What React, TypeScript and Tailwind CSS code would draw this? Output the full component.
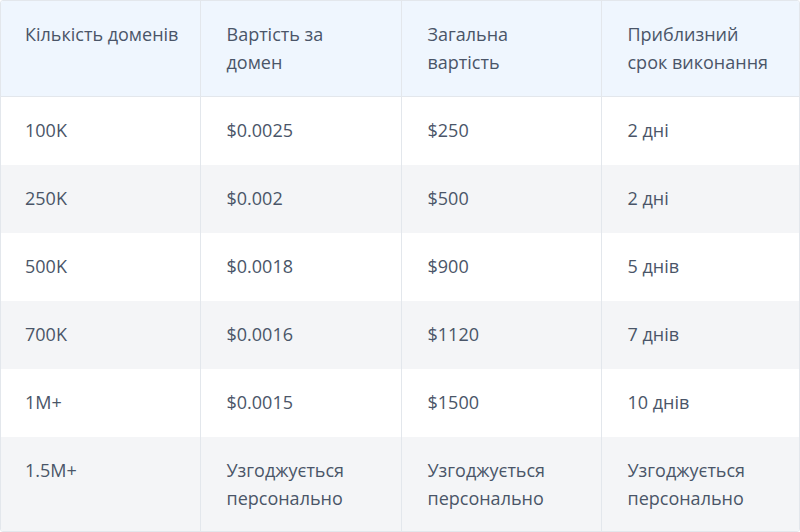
const header = [["Кількість доменів"], ["Вартість за", "домен"], ["Загальна", "вартість"], ["Приблизний", "срок виконання"]];

const rows = [
  ["100K", "$0.0025", "$250", "2 дні"],
  ["250K", "$0.002", "$500", "2 дні"],
  ["500K", "$0.0018", "$900", "5 днів"],
  ["700K", "$0.0016", "$1120", "7 днів"],
  ["1M+", "$0.0015", "$1500", "10 днів"],
  ["1.5M+", "Узгоджується персонально", "Узгоджується персонально", "Узгоджується персонально"],
];

const widths = ["w-[199px]", "w-[201px]", "w-[200px]", ""];

export default function App() {
  return (
    <div className="w-[800px] h-[532px] bg-white" style={{ fontFamily: '"Open Sans", "Noto Sans", sans-serif' }}>
      <div className="border border-[#e3e7ec] rounded-[3px] overflow-hidden">
        <table className="w-full table-fixed border-collapse text-[18px] leading-7 text-[#4a5568]">
          <colgroup>
            {widths.map((w, i) => (
              <col key={i} className={w} />
            ))}
          </colgroup>
          <thead>
            <tr className="bg-[#eff6fe]">
              {header.map((h, i) => (
                <th
                  key={i}
                  className={
                    "pt-[19px] pb-5 pr-0 text-left font-normal align-top border-b border-[#e3e7ec] " +
                    (i === 0 ? "pl-6 " : "pl-[26px] ") +
                    (i < 3 ? "border-r" : "")
                  }
                >
                  {h.map((line) => (
                    <span key={line} className="block whitespace-nowrap">
                      {line}
                    </span>
                  ))}
                </th>
              ))}
            </tr>
          </thead>
          <tbody>
            {rows.map((r, ri) => (
              <tr key={ri} className={ri % 2 === 1 ? "bg-[#f4f5f7]" : "bg-white"}>
                {r.map((c, ci) => (
                  <td
                    key={ci}
                    className={
                      "pt-[19px] pr-6 align-top " +
                      (ci === 0 ? "pl-6 " : "pl-[26px] ") +
                      (ri === rows.length - 1 ? "pb-[19px] " : "pb-[21px] ") +
                      (ci < 3 ? "border-r border-[#e3e7ec]" : "")
                    }
                  >
                    {c}
                  </td>
                ))}
              </tr>
            ))}
          </tbody>
        </table>
      </div>
    </div>
  );
}
